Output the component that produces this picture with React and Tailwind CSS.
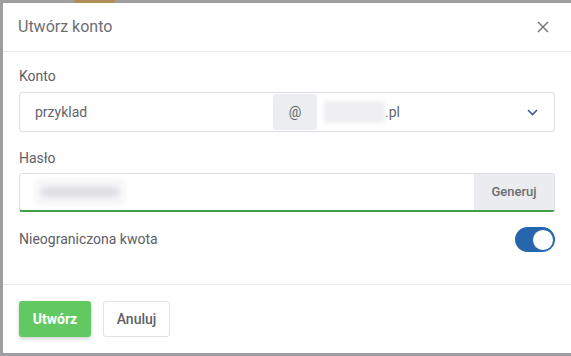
import React from 'react';

const App = () => {
  return (
    <div className="w-[571px] h-[356px] bg-[#9e9ea1] flex flex-col overflow-hidden font-['Roboto',sans-serif]">
      {/* page strip behind the modal */}
      <div className="h-[3px] flex shrink-0">
        <div className="w-[74px]" />
        <div className="w-[41px] bg-[#b08e5a]" />
      </div>

      <div className="flex flex-1 pb-[3px]">
        <div className="w-[3px] shrink-0" />

        {/* Modal */}
        <div className="flex-1 bg-white flex flex-col">
          {/* Header */}
          <div className="h-[49px] shrink-0 flex items-center justify-between pl-[15px] pr-[22px] border-b border-[#e9e9ec]">
            <h2 className="text-[16px] text-[#6b6e74] leading-none">Utwórz konto</h2>
            <svg width="12" height="12" viewBox="0 0 12 12" className="text-[#6f7177]">
              <path d="M1 1L11 11M11 1L1 11" stroke="currentColor" strokeWidth="1.4" fill="none" />
            </svg>
          </div>

          {/* Body */}
          <div className="px-[16px] pt-[14px] pb-[32px] flex flex-col">
            <label className="text-[14px] leading-[20px] text-[#5d6066]">Konto</label>
            <div className="mt-[6px] h-[40px] border border-[#dcdee6] rounded-[3px] flex items-center">
              <div className="w-[253px] pl-[15px] text-[14px] text-[#62656b]">przyklad</div>
              <div className="w-[44px] h-[36px] bg-[#ecedf0] rounded-[3px] flex items-center justify-center text-[14px] text-[#62656b]">@</div>
              <div className="flex-1 flex items-center pl-[7px] pr-[16px]">
                <div className="w-[61px] h-[22px] bg-[#efeff1] blur-[2px]" />
                <span className="text-[14px] text-[#62656b]">.pl</span>
                <svg width="11" height="7" viewBox="0 0 11 7" className="ml-auto text-[#3f5a93]">
                  <path d="M1 1L5.5 5.5L10 1" stroke="currentColor" strokeWidth="1.6" fill="none" />
                </svg>
              </div>
            </div>

            <label className="mt-[16px] text-[14px] leading-[20px] text-[#5d6066]">Hasło</label>
            <div className="mt-[5px] h-[39px] border border-[#dcdee6] border-b-2 border-b-[#3f9f45] rounded-[3px] flex items-stretch">
              <div className="flex-1 flex items-center pl-[16px]">
                <div className="w-[88px] h-[24px] bg-[#f4f4f6] blur-[3px] flex items-center justify-center">
                  <div className="w-[76px] h-[8px] bg-[#d8d9de] rounded-full" />
                </div>
              </div>
              <div className="w-[80px] bg-[#ebecef] flex items-center justify-center text-[13px] font-medium text-[#6b6e74]">Generuj</div>
            </div>

            <div className="mt-[15px] flex items-center justify-between">
              <span className="text-[14px] text-[#5d6066]">Nieograniczona kwota</span>
              <div className="w-[40px] h-[25px] bg-[#2566ad] rounded-full flex items-center justify-end pr-[1px]">
                <div className="w-[22px] h-[22px] bg-white rounded-full border-[1.5px] border-[#2566ad]" />
              </div>
            </div>
          </div>

          {/* Footer */}
          <div className="border-t border-[#e9e9ec] px-[16px] pt-[16px] flex gap-[12px]">
            <button className="w-[72px] h-[36px] bg-[#62c962] rounded-[3px] text-white text-[14px] font-bold shadow-[0_2px_4px_rgba(0,0,0,0.18)]">Utwórz</button>
            <button className="w-[67px] h-[36px] bg-white border border-[#e2e3e7] rounded-[3px] text-[#5d6066] text-[14px] font-medium">Anuluj</button>
          </div>
        </div>
      </div>
    </div>
  );
};

export default App;
